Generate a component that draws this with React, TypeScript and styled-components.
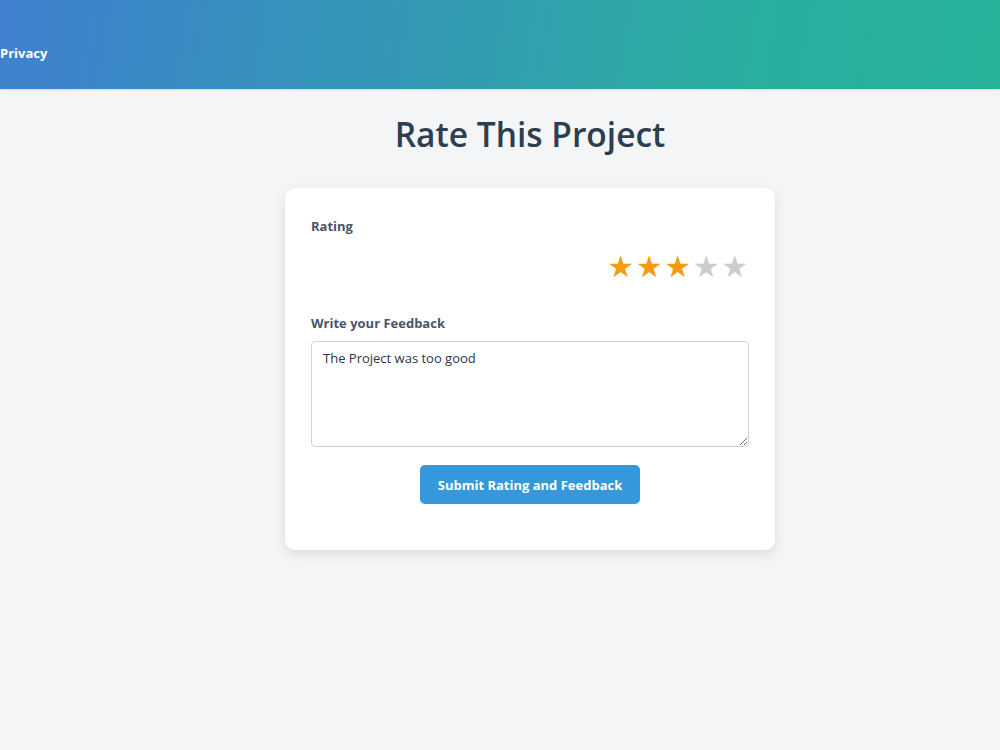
import { useState } from 'react'
import styled, { createGlobalStyle } from 'styled-components'

const GlobalStyle = createGlobalStyle`
  html, body {
    margin: 0;
    padding: 0;
    background: #f4f5f7;
    font-family: 'Open Sans', 'Noto Sans', 'Liberation Sans', sans-serif;
  }
`

const Page = styled.div`
  min-height: 750px;
  background: #f4f5f7;
`

const Header = styled.header`
  height: 89px;
  display: flex;
  align-items: center;
  background: linear-gradient(100deg, #3f80cf 0%, #2aae9f 75%, #27b29a 100%);
  box-shadow: 0 1px 2px rgba(0, 0, 0, 0.12);
`

const NavLink = styled.a`
  color: #ffffff;
  font-size: 13px;
  font-weight: 700;
  text-decoration: none;
  margin-top: 17px;
`

const Main = styled.main`
  display: flex;
  flex-direction: column;
  align-items: center;
  padding-left: 60px;
`

const Title = styled.h1`
  margin: 22px 0 31px;
  font-size: 33.5px;
  font-weight: 600;
  color: #2c3e50;
  line-height: 46px;
`

const Card = styled.div`
  width: 490px;
  box-sizing: border-box;
  background: #ffffff;
  border-radius: 10px;
  padding: 29px 26px 46px;
  box-shadow: 0 4px 12px rgba(0, 0, 0, 0.1);
  display: flex;
  flex-direction: column;
`

const Label = styled.label`
  font-size: 13px;
  font-weight: 700;
  color: #4a5568;
  line-height: 18px;
`

const Stars = styled.div`
  display: flex;
  justify-content: flex-end;
  margin: 14px 0 29px;
`

const Star = styled.span<{ $on: boolean }>`
  font-size: 30px;
  line-height: 36px;
  width: 28.5px;
  text-align: center;
  cursor: pointer;
  color: ${({ $on }) => ($on ? '#f39c12' : '#cccccc')};
  font-family: 'DejaVu Sans', sans-serif;
`

const TextArea = styled.textarea`
  margin-top: 9px;
  height: 106px;
  box-sizing: border-box;
  width: 100%;
  border: 1px solid #cfd4da;
  border-radius: 4px;
  padding: 7px 11px;
  font-family: 'Open Sans', 'Noto Sans', 'Liberation Sans', sans-serif;
  font-size: 13px;
  color: #2d3748;
  resize: vertical;
  outline: none;
`

const SubmitButton = styled.button`
  align-self: center;
  margin-top: 18px;
  height: 39px;
  padding: 0 18px;
  background: #3498db;
  border: none;
  border-radius: 5px;
  color: #ffffff;
  font-family: 'Open Sans', 'Noto Sans', 'Liberation Sans', sans-serif;
  font-size: 13px;
  font-weight: 700;
  cursor: pointer;
`

const App = () => {
  const [rating, setRating] = useState(3)
  const [feedback, setFeedback] = useState('The Project was too good')

  return (
    <Page>
      <GlobalStyle />
      <Header>
        <NavLink href="#">Privacy</NavLink>
      </Header>
      <Main>
        <Title>Rate This Project</Title>
        <Card>
          <Label>Rating</Label>
          <Stars>
            {[1, 2, 3, 4, 5].map((n) => (
              <Star key={n} $on={n <= rating} onClick={() => setRating(n)}>
                ★
              </Star>
            ))}
          </Stars>
          <Label>Write your Feedback</Label>
          <TextArea
            value={feedback}
            onChange={(e) => setFeedback(e.target.value)}
          />
          <SubmitButton>Submit Rating and Feedback</SubmitButton>
        </Card>
      </Main>
    </Page>
  )
}

export default App
